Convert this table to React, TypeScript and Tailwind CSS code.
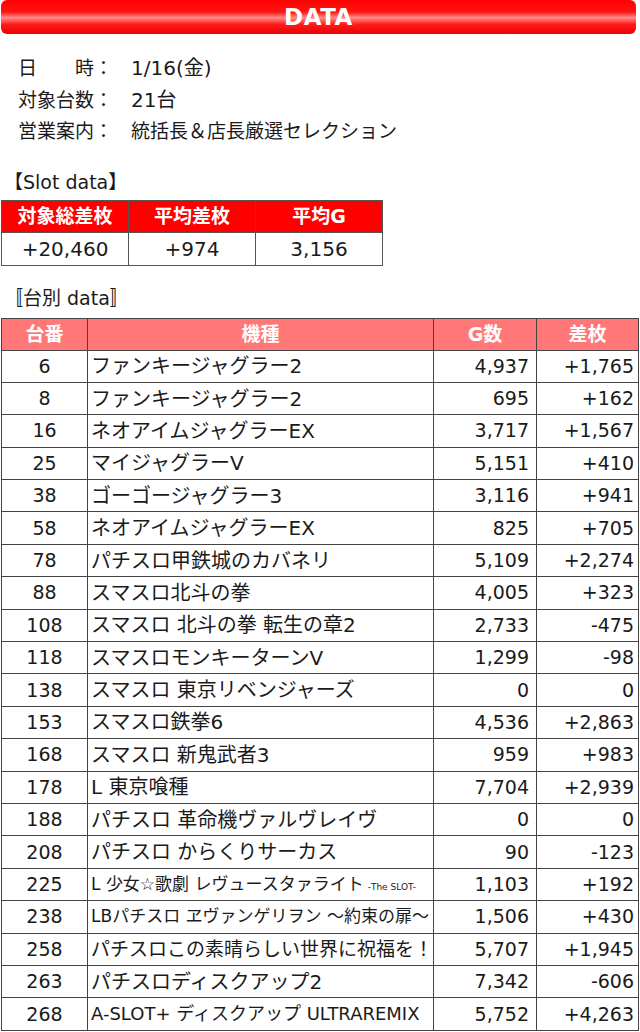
const rows: { no: string; name: string; small?: string; g: string; diff: string; size?: string }[] = [
  { no: "6", name: "ファンキージャグラー2", g: "4,937", diff: "+1,765" },
  { no: "8", name: "ファンキージャグラー2", g: "695", diff: "+162" },
  { no: "16", name: "ネオアイムジャグラーEX", g: "3,717", diff: "+1,567" },
  { no: "25", name: "マイジャグラーV", g: "5,151", diff: "+410" },
  { no: "38", name: "ゴーゴージャグラー3", g: "3,116", diff: "+941" },
  { no: "58", name: "ネオアイムジャグラーEX", g: "825", diff: "+705" },
  { no: "78", name: "パチスロ甲鉄城のカバネリ", g: "5,109", diff: "+2,274" },
  { no: "88", name: "スマスロ北斗の拳", g: "4,005", diff: "+323" },
  { no: "108", name: "スマスロ 北斗の拳 転生の章2", g: "2,733", diff: "-475" },
  { no: "118", name: "スマスロモンキーターンV", g: "1,299", diff: "-98" },
  { no: "138", name: "スマスロ 東京リベンジャーズ", g: "0", diff: "0" },
  { no: "153", name: "スマスロ鉄拳6", g: "4,536", diff: "+2,863" },
  { no: "168", name: "スマスロ 新鬼武者3", g: "959", diff: "+983" },
  { no: "178", name: "L 東京喰種", g: "7,704", diff: "+2,939" },
  { no: "188", name: "パチスロ 革命機ヴァルヴレイヴ", g: "0", diff: "0" },
  { no: "208", name: "パチスロ からくりサーカス", g: "90", diff: "-123" },
  { no: "225", name: "L 少女☆歌劇 レヴュースタァライト", small: "-The SLOT-", g: "1,103", diff: "+192", size: "text-[17px]" },
  { no: "238", name: "LBパチスロ ヱヴァンゲリヲン ～約束の扉～", g: "1,506", diff: "+430", size: "text-[17px]" },
  { no: "258", name: "パチスロこの素晴らしい世界に祝福を！", g: "5,707", diff: "+1,945", size: "text-[19px]" },
  { no: "263", name: "パチスロディスクアップ2", g: "7,342", diff: "-606" },
  { no: "268", name: "A-SLOT+ ディスクアップ ULTRAREMIX", g: "5,752", diff: "+4,263", size: "text-[18px]" },
];

const font = "font-['DejaVu_Sans','Noto_Sans_CJK_JP',sans-serif]";

export default function App() {
  return (
    <div className={`w-[640px] h-[1032px] bg-white text-[#1a1a1a] overflow-hidden ${font}`}>
      <div className="mx-[1px] w-[635px] h-[34px] rounded-[6px] bg-[linear-gradient(to_bottom,#ff0000_0%,#ff1414_35%,#ff8c8c_52%,#ff1a1a_72%,#ea0000_100%)] flex items-center justify-center">
        <span className="text-white font-bold text-[23px] leading-none tracking-[0.5px] pt-[1px]">DATA</span>
      </div>

      <div className="mt-[19px] pl-[18px] text-[19px] leading-[31.5px]">
        <div className="flex">
          <span className="w-[113px]">日　　時：</span>
          <span className="text-[20px]">1/16(金)</span>
        </div>
        <div className="flex">
          <span className="w-[113px]">対象台数：</span>
          <span className="text-[20px]">21台</span>
        </div>
        <div className="flex">
          <span className="w-[113px]">営業案内：</span>
          <span>統括長＆店長厳選セレクション</span>
        </div>
      </div>

      <div className="mt-[21px] pl-[4px] text-[19px] leading-[26px]">【Slot data】</div>

      <table className="mt-[5px] ml-[1px] table-fixed border-collapse text-center">
        <colgroup>
          <col className="w-[127px]" />
          <col className="w-[127px]" />
          <col className="w-[127px]" />
        </colgroup>
        <thead>
          <tr className="h-[32px] bg-[#ff0000] text-white font-bold text-[19px]">
            <th className="border border-[#555] p-0">対象総差枚</th>
            <th className="border border-[#555] p-0">平均差枚</th>
            <th className="border border-[#555] p-0">平均G</th>
          </tr>
        </thead>
        <tbody>
          <tr className="h-[33px] text-[20px]">
            <td className="border border-[#555] p-0">+20,460</td>
            <td className="border border-[#555] p-0">+974</td>
            <td className="border border-[#555] p-0">3,156</td>
          </tr>
        </tbody>
      </table>

      <div className="mt-[19px] pl-[4px] text-[19px] leading-[26px]">〚台別 data〛</div>

      <table className="mt-[7px] ml-[1px] table-fixed border-collapse">
        <colgroup>
          <col className="w-[86px]" />
          <col className="w-[346px]" />
          <col className="w-[103px]" />
          <col className="w-[102px]" />
        </colgroup>
        <thead>
          <tr className="h-[32px] bg-[#ff7777] text-white font-bold text-[19px]">
            <th className="border border-[#444] p-0 text-center">台番</th>
            <th className="border border-[#444] p-0 text-center">機種</th>
            <th className="border border-[#444] p-0 text-center">G数</th>
            <th className="border border-[#444] p-0 text-center">差枚</th>
          </tr>
        </thead>
        <tbody>
          {rows.map((r) => (
            <tr key={r.no} className="h-[32.4px] text-[19px] leading-none">
              <td className="border border-[#444] p-0 text-center">{r.no}</td>
              <td className={`border border-[#444] py-0 pl-[3px] pr-0 whitespace-nowrap overflow-hidden ${r.size ?? "text-[20px]"}`}>
                {r.name}
                {r.small && <span className="ml-[4px] text-[9px]">{r.small}</span>}
              </td>
              <td className="border border-[#444] py-0 pl-0 pr-[7px] text-right">{r.g}</td>
              <td className="border border-[#444] py-0 pl-0 pr-[4px] text-right">{r.diff}</td>
            </tr>
          ))}
        </tbody>
      </table>
    </div>
  );
}
